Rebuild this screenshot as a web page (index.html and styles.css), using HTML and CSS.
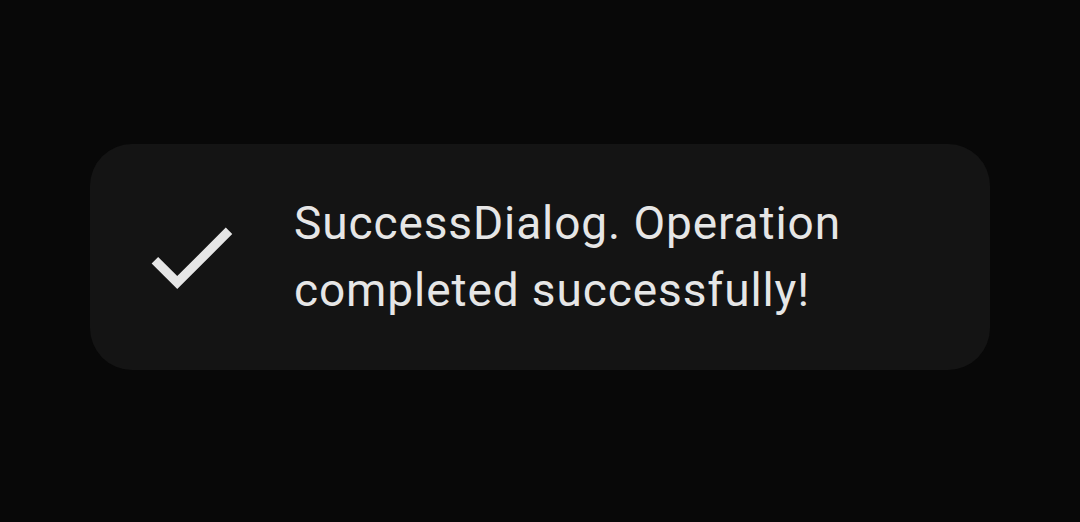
FILE: index.html
```html
<!DOCTYPE html>
<html>
<head>
<meta charset="utf-8">
<link rel="stylesheet" href="styles.css">
</head>
<body>
<div class="screen">
  <div class="dialog">
    <svg class="icon" viewBox="0 0 24 24" width="110" height="110">
      <path d="M9 16.17L4.83 12l-1.42 1.41L9 19 21 7l-1.41-1.41z" fill="#e6e6e6"/>
    </svg>
    <div class="message">SuccessDialog. Operation completed successfully!</div>
  </div>
</div>
</body>
</html>
```

FILE: styles.css
```css
html, body {
  margin: 0;
  padding: 0;
  background: #080808;
}
.screen {
  width: 1080px;
  height: 522px;
  box-sizing: border-box;
  padding-bottom: 8px;
  display: flex;
  align-items: center;
  justify-content: center;
}
.dialog {
  width: 900px;
  height: 226px;
  box-sizing: border-box;
  background: #141414;
  border-radius: 42px;
  display: flex;
  align-items: center;
  padding-left: 46px;
  gap: 48px;
}
.icon {
  flex: none;
  display: block;
}
.message {
  font-family: Roboto, "Liberation Sans", sans-serif;
  font-size: 46px;
  line-height: 67.5px;
  letter-spacing: 0.9px;
  color: #e6e6e6;
  width: 580px;
}
```
